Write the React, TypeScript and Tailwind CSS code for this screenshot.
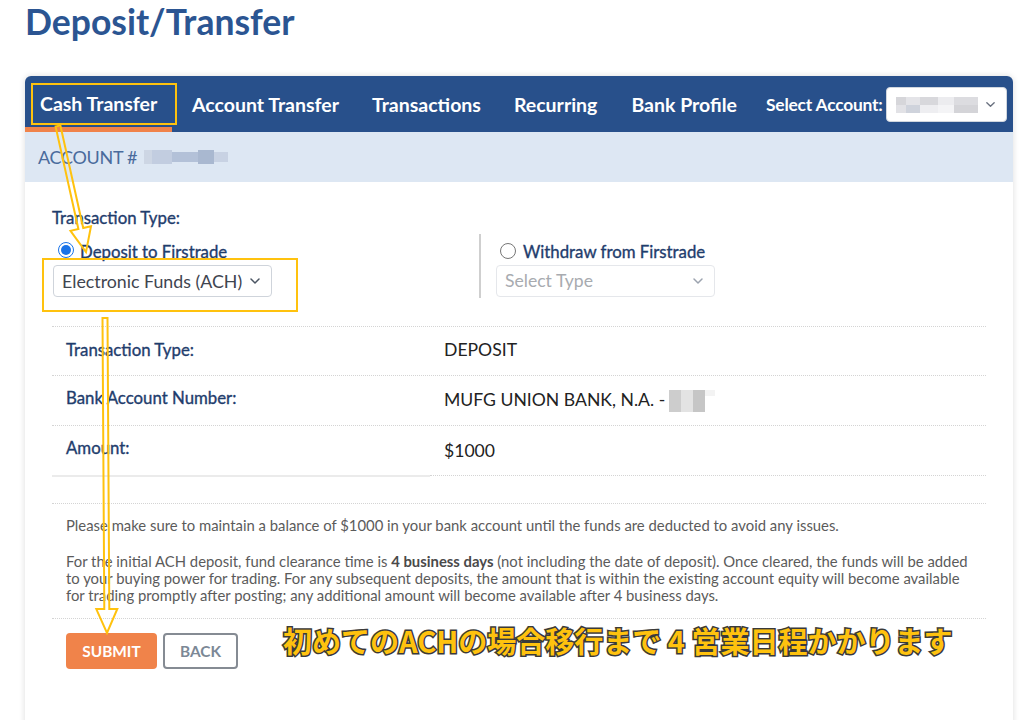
import React from "react";

type Pt = [number, number];
function arrowPoints(x1: number, y1: number, x2: number, y2: number, sw: number, hw: number, hl: number): string {
  const dx = x2 - x1, dy = y2 - y1;
  const L = Math.hypot(dx, dy);
  const ux = dx / L, uy = dy / L;
  const px = -uy, py = ux;
  const bx = x2 - ux * hl, by = y2 - uy * hl;
  const pts: Pt[] = [
    [x1 + (px * sw) / 2, y1 + (py * sw) / 2],
    [bx + (px * sw) / 2, by + (py * sw) / 2],
    [bx + (px * hw) / 2, by + (py * hw) / 2],
    [x2, y2],
    [bx - (px * hw) / 2, by - (py * hw) / 2],
    [bx - (px * sw) / 2, by - (py * sw) / 2],
    [x1 - (px * sw) / 2, y1 - (py * sw) / 2],
  ];
  return pts.map((p) => `${p[0].toFixed(1)},${p[1].toFixed(1)}`).join(" ");
}

function Chevron({ color = "#5a6577", size = 12 }: { color?: string; size?: number }) {
  return (
    <svg width={size} height={size} viewBox="0 0 12 12" fill="none">
      <polyline points="2,4 6,8 10,4" stroke={color} strokeWidth="1.5" strokeLinecap="round" strokeLinejoin="round" />
    </svg>
  );
}

function Radio({ checked }: { checked: boolean }) {
  return checked ? (
    <div className="w-[16px] h-[16px] rounded-full border-[1px] border-[#1a73e8] bg-white flex items-center justify-center shrink-0">
      <div className="w-[10px] h-[10px] rounded-full bg-[#1a73e8]" />
    </div>
  ) : (
    <div className="w-[16px] h-[16px] rounded-full border-[1.5px] border-[#767676] bg-white shrink-0" />
  );
}

const label = "text-[16.8px] leading-[20px] text-[#1f3d6d] [-webkit-text-stroke:0.35px_#1f3d6d]";

export default function App() {
  return (
    <div className="relative w-[1024px] h-[720px] overflow-hidden bg-white font-['Lato','Noto_Sans_CJK_JP',sans-serif]">
      <h1 className="pl-[25px] h-[44px] leading-[44px] text-[35.5px] font-bold text-[#2b5592]">Deposit/Transfer</h1>

      <div className="mt-[32px] ml-[25px] w-[988px] h-[700px] rounded-t-[6px] bg-white shadow-[0_0_6px_rgba(0,0,0,0.14)] overflow-hidden">
        {/* Nav */}
        <div className="h-[56px] bg-[#28508b] flex items-stretch text-white">
          <div className="w-[147px] pl-[15px] border-b-[5px] border-[#f0834a] flex items-center pt-[5px]">
            <span className="text-[19.5px] font-bold leading-[22px]">Cash Transfer</span>
          </div>
          <div className="flex items-center ml-[20px] gap-[33px] text-[19.5px] font-bold leading-[22px] pt-[1px]">
            <span>Account Transfer</span>
            <span>Transactions</span>
            <span>Recurring</span>
            <span className="ml-[1px]">Bank Profile</span>
          </div>
          <div className="flex items-center ml-[29px] pt-[1px]">
            <span className="text-[17.4px] font-bold leading-[20px] tracking-[-0.2px]">Select Account:</span>
            <div className="ml-[3px] w-[121px] h-[35px] bg-white rounded-[4px] border border-[#d0d6de] flex items-center pl-[9px] pr-[10px] shrink-0">
              <div className="flex flex-col">
                <div className="flex">
                  <div className="w-[10px] h-[8px] bg-[#d6d6da]" />
                  <div className="w-[14px] h-[8px] bg-[#e4e4e8]" />
                  <div className="w-[18px] h-[8px] bg-[#d8d8dc]" />
                  <div className="w-[16px] h-[8px] bg-[#ececef]" />
                  <div className="w-[24px] h-[8px] bg-[#dcdce0]" />
                </div>
                <div className="flex">
                  <div className="w-[10px] h-[8px] bg-[#e2e2e6]" />
                  <div className="w-[14px] h-[8px] bg-[#cfd3dc]" />
                  <div className="w-[18px] h-[8px] bg-[#eeeef1]" />
                  <div className="w-[16px] h-[8px] bg-[#f4f4f6]" />
                  <div className="w-[24px] h-[8px] bg-[#d4d4d8]" />
                </div>
              </div>
              <div className="ml-auto">
                <Chevron color="#6b7280" size={11} />
              </div>
            </div>
          </div>
        </div>

        {/* Account band */}
        <div className="h-[50px] bg-[#dde7f3] flex items-center pl-[13px]">
          <span className="text-[18px] leading-[22px] text-[#4a6b9c] tracking-[-0.3px]">ACCOUNT #</span>
          <div className="ml-[7px] flex items-center">
            <div className="w-[8px] h-[14px] bg-[#cdd6e4]" />
            <div className="w-[20px] h-[14px] bg-[#c2cde0]" />
            <div className="w-[26px] h-[10px] bg-[#b3c1d8]" />
            <div className="w-[16px] h-[14px] bg-[#a9b8d0]" />
            <div className="w-[14px] h-[10px] bg-[#c8d2e3]" />
          </div>
        </div>

        {/* Body */}
        <div className="px-[27px]">
          <div className={`pt-[26px] ${label}`}>Transaction Type:</div>
          <div className="mt-[6px] flex items-start">
            <div className="w-[427px]">
              <div className="mt-[8px] h-[20px] flex items-center pl-[6px]">
                <div className="-mt-[4px]"><Radio checked /></div>
                <span className={`ml-[6px] ${label}`}>Deposit to Firstrade</span>
              </div>
              <div className="mt-[3px] ml-[1px] w-[219px] h-[32px] rounded-[4px] border border-[#cfd4db] flex items-center pl-[8px] pr-[10px]">
                <span className="text-[17.8px] text-[#3f4550] leading-[20px] whitespace-nowrap">Electronic Funds (ACH)</span>
                <div className="ml-auto"><Chevron color="#4b5563" size={12} /></div>
              </div>
            </div>
            <div className="w-[2px] h-[64px] bg-[#cfcfcf]" />
            <div className="ml-[15px]">
              <div className="mt-[8px] h-[20px] flex items-center pl-[4px]">
                <div className="-mt-[3px]"><Radio checked={false} /></div>
                <span className={`ml-[7px] ${label}`}>Withdraw from Firstrade</span>
              </div>
              <div className="mt-[3px] w-[219px] h-[32px] rounded-[4px] border border-[#e5e7eb] flex items-center pl-[8px] pr-[10px]">
                <span className="text-[17.6px] text-[#a8abb0] leading-[20px]">Select Type</span>
                <div className="ml-auto"><Chevron color="#9ca3af" size={12} /></div>
              </div>
            </div>
          </div>

          {/* Table */}
          <div className="mt-[28px]">
            <div className="h-[49px] border-t border-dotted border-[#d4d4d4] flex pt-[13px]">
              <div className={`w-[392px] pl-[14px] ${label}`}>Transaction Type:</div>
              <div className="text-[17.6px] leading-[20px] text-[#222]">DEPOSIT</div>
            </div>
            <div className="h-[50px] border-t border-dotted border-[#d4d4d4] flex pt-[12px]">
              <div className={`w-[392px] pl-[14px] ${label}`}>Bank Account Number:</div>
              <div className="flex items-start text-[17.6px] leading-[20px] text-[#222] pt-[2px]">
                <span>MUFG UNION BANK, N.A. -</span>
                <div className="ml-[4px] flex">
                  <div className="w-[12px] h-[22px] bg-[#cdcdcd]" />
                  <div className="w-[12px] h-[22px] bg-[#e3e3e3]" />
                  <div className="w-[12px] h-[22px] bg-[#c6c6c6]" />
                  <div className="w-[10px] h-[6px] bg-[#f3f3f3]" />
                </div>
              </div>
            </div>
            <div className="h-[50px] border-t border-dotted border-[#d4d4d4] flex pt-[12px]">
              <div className={`w-[392px] pl-[14px] ${label}`}>Amount:</div>
              <div className="text-[17.6px] leading-[20px] text-[#222] pt-[3px]">$1000</div>
            </div>
            <div className="flex">
              <div className="w-[378px] h-[2px] bg-[#ebebeb]" />
              <div className="flex-1 border-t border-dotted border-[#d4d4d4]" />
            </div>
          </div>

          {/* Notes */}
          <div className="mt-[26px] border-t border-b border-dotted border-[#d4d4d4] pl-[14px] pr-[12px] pt-[13px] pb-[14px] text-[14.85px] leading-[17px] text-[#5b5b5b]">
            <p>Please make sure to maintain a balance of $1000 in your bank account until the funds are deducted to avoid any issues.</p>
            <p className="mt-[19px]">
              For the initial ACH deposit, fund clearance time is <b className="font-bold text-[#4a4a4a]">4 business days</b> (not including the date of deposit). Once cleared, the funds will be added to your buying power for trading. For any subsequent deposits, the amount that is within the existing account equity will become available for trading promptly after posting; any additional amount will become available after 4 business days.
            </p>
          </div>

          {/* Buttons */}
          <div className="mt-[14px] pl-[14px] flex items-start">
            <button className="w-[91px] h-[36px] rounded-[4px] bg-[#f0834a] text-white text-[15.4px] font-bold leading-[20px]">SUBMIT</button>
            <button className="ml-[6px] w-[75px] h-[36px] rounded-[4px] border-2 border-[#858b93] text-[#7c8896] text-[15.4px] font-bold leading-[20px]">BACK</button>
            <div className="ml-[45px] -mt-[9px] whitespace-nowrap text-[29px] leading-[32px] font-bold text-[#ffc20e] [-webkit-text-stroke:3px_#3a3a3a] [paint-order:stroke_fill] font-['Noto_Sans_CJK_JP',sans-serif]">
              初めてのACHの場合移行まで 4 営業日程かかります
            </div>
          </div>
        </div>
      </div>

      {/* Annotations */}
      <div className="absolute left-[31px] top-[83px] w-[146px] h-[42px] border-2 border-[#ffc20e] pointer-events-none" />
      <div className="absolute left-[42px] top-[258px] w-[256px] h-[54px] border-2 border-[#ffc20e] pointer-events-none" />
      <svg className="absolute left-0 top-0 pointer-events-none" width="1024" height="720" viewBox="0 0 1024 720">
        <polygon points={arrowPoints(58, 126, 86, 252, 5, 21, 24)} fill="none" stroke="#ffc20e" strokeWidth="2" strokeLinejoin="miter" />
        <polygon points={arrowPoints(105, 318, 107, 633, 5, 21, 24)} fill="none" stroke="#ffc20e" strokeWidth="2" strokeLinejoin="miter" />
      </svg>
    </div>
  );
}
